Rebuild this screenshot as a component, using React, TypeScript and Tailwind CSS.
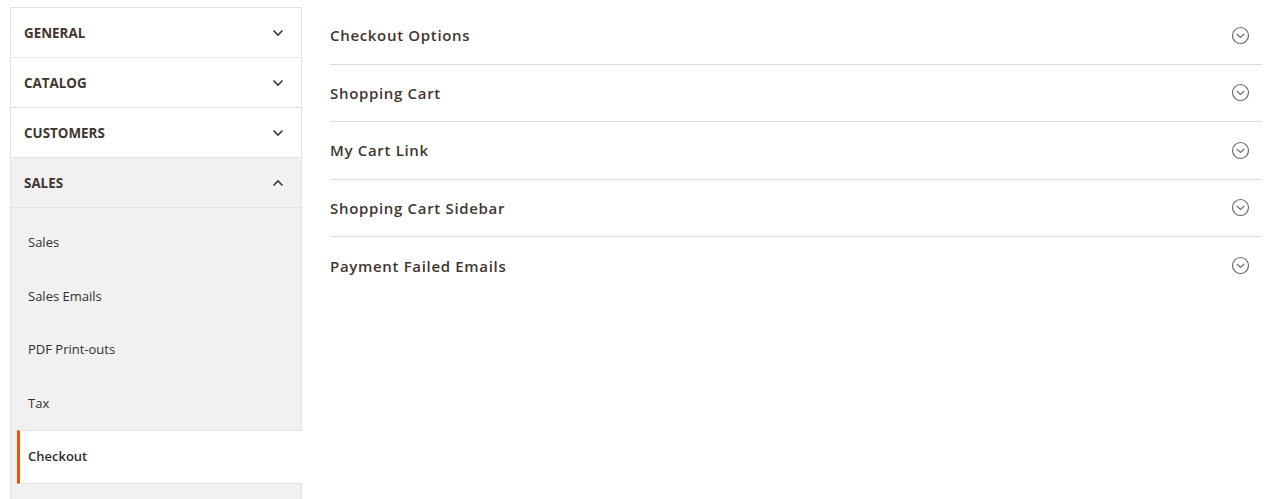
import React from "react";

const Chevron = ({ up }: { up?: boolean }) => (
  <svg width="12" height="8" viewBox="0 0 12 8" className="shrink-0">
    <path
      d={up ? "M1.5 6.5 L6 2 L10.5 6.5" : "M1.5 1.5 L6 6 L10.5 1.5"}
      fill="none"
      stroke="#41362f"
      strokeWidth="1.6"
    />
  </svg>
);

const CircleChevron = () => (
  <svg width="19" height="19" viewBox="0 0 19 19" className="shrink-0">
    <circle cx="9.5" cy="9.5" r="8" fill="none" stroke="#6b6b6b" strokeWidth="1.2" />
    <path d="M5.8 8 L9.5 11.5 L13.2 8" fill="none" stroke="#6b6b6b" strokeWidth="1.2" />
  </svg>
);

const headings = ["GENERAL", "CATALOG", "CUSTOMERS"];
const subItems = ["Sales", "Sales Emails", "PDF Print-outs", "Tax"];
const sections = [
  "Checkout Options",
  "Shopping Cart",
  "My Cart Link",
  "Shopping Cart Sidebar",
  "Payment Failed Emails",
];

export default function App() {
  return (
    <div
      className="w-[1286px] h-[499px] overflow-hidden bg-white flex text-[#303030]"
      style={{ fontFamily: '"Open Sans", sans-serif' }}
    >
      <div className="ml-[10px] mt-[7px] w-[292px] shrink-0 border border-[#e3e3e3] border-b-0 self-start">
        {headings.map((h) => (
          <div
            key={h}
            className="h-[50px] border-b border-[#e3e3e3] flex items-center justify-between pl-[13px] pr-[17px]"
          >
            <span className="text-[13.4px] font-bold text-[#41362f] translate-y-[1px]">{h}</span>
            <Chevron />
          </div>
        ))}
        <div className="h-[50px] border-b border-[#e3e3e3] bg-[#f1f1f1] flex items-center justify-between pl-[13px] pr-[17px]">
          <span className="text-[13.4px] font-bold text-[#41362f] translate-y-[1px]">SALES</span>
          <Chevron up />
        </div>
        <div className="bg-[#f1f1f1] pt-[8px] h-[300px]">
          {subItems.map((s) => (
            <div
              key={s}
              className="h-[53.5px] ml-[7px] border-l-[3px] border-transparent pl-[7px] flex items-center text-[13px]"
            >
              {s}
            </div>
          ))}
          <div className="h-[53.5px] ml-[6px] mr-[-1px] border-l-[3px] border-[#eb5202] border-y border-y-[#e3e3e3] bg-white pl-[8px] flex items-center text-[13px] font-semibold">
            Checkout
          </div>
        </div>
      </div>
      <div className="ml-[28px] mr-[24px] pt-[7px] flex-1">
        {sections.map((s, i) => (
          <div
            key={s}
            className={
              "h-[57.5px] flex items-center justify-between pr-[12px] " +
              (i < sections.length - 1 ? "border-b border-[#dcdcdc]" : "")
            }
          >
            <span className="text-[15px] font-semibold tracking-[0.045em] text-[#41362f]">{s}</span>
            <CircleChevron />
          </div>
        ))}
      </div>
    </div>
  );
}
